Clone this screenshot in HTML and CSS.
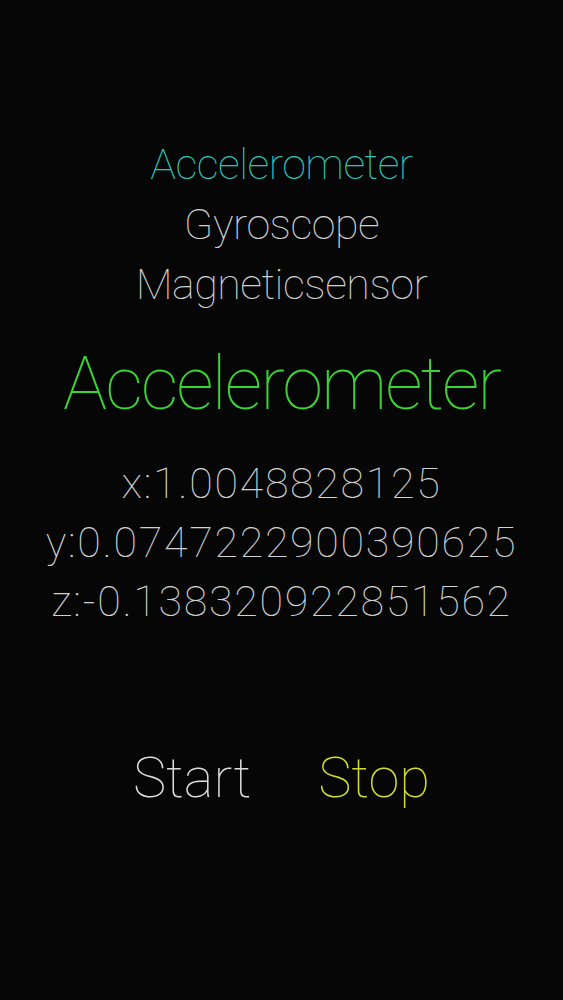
FILE: index.html
```html
<!doctype html>
<html>
<head>
	<meta charset="UTF-8">
	<title>Sensors</title>
	<link rel="stylesheet" href="styles.css">
</head>
<body>
	<div class="screen">
		<ul class="sensor-list">
			<li class="sensor-item current">Accelerometer</li>
			<li class="sensor-item">Gyroscope</li>
			<li class="sensor-item">Magneticsensor</li>
		</ul>
		<h1 class="sensor-title">Accelerometer</h1>
		<ul class="sensor-values">
			<li>x:1.0048828125</li>
			<li>y:0.0747222900390625</li>
			<li>z:-0.138320922851562</li>
		</ul>
		<div class="controls">
			<a class="btn btn-start" href="javascript:void(0);">Start</a>
			<a class="btn btn-stop" href="javascript:void(0);">Stop</a>
		</div>
	</div>
</body>
</html>
```
FILE: styles.css
```css
/* reset */
body,h1,ul,li{margin:0;padding:0;}
ul{list-style:none;}
a{text-decoration:none;}
html,body{width:100%;height:100%;background-color:#060606;}
body{font-family:Roboto, "Liberation Sans", sans-serif;font-weight:100;color:#d2d2d2;}
/* screen */
.screen{display:flex;flex-direction:column;align-items:center;padding-top:134px;}
.sensor-list{text-align:center;}
.sensor-item{font-size:43px;line-height:60px;letter-spacing:-0.5px;}
.sensor-item.current{color:#2fc6bc;}
.sensor-title{margin-top:25px;font-size:74px;line-height:90px;font-weight:100;letter-spacing:-2px;color:#3ad434;}
.sensor-values{margin-top:25px;text-align:center;}
.sensor-values li{font-size:43px;line-height:59px;letter-spacing:1.7px;white-space:nowrap;}
.controls{display:flex;gap:67px;margin-top:112px;}
.btn{font-size:56px;line-height:70px;color:#dcdcdc;}
.btn-stop{color:#d2dc2e;}
```
